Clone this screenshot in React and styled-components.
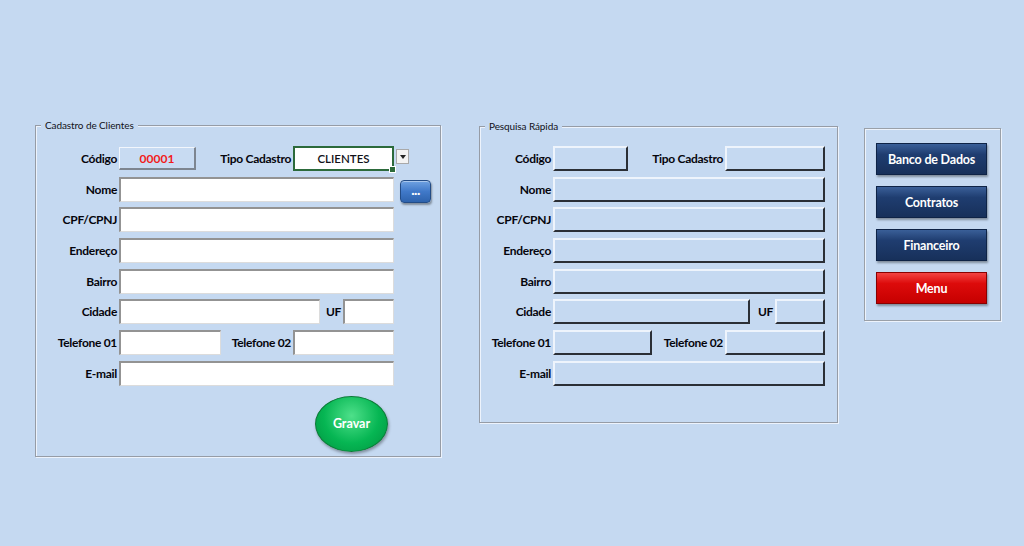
import React from 'react';
import styled, { createGlobalStyle } from 'styled-components';

const GlobalStyle = createGlobalStyle`
  html, body {
    margin: 0;
    padding: 0;
    background: #c5d9f1;
  }
  body {
    font-family: Lato, "Liberation Sans", sans-serif;
    color: #05050c;
  }
`;

const Page = styled.div`
  width: 1024px;
  height: 546px;
  box-sizing: border-box;
  padding: 125px 0 0 35px;
  display: flex;
  align-items: flex-start;
  background: #c5d9f1;
  overflow: hidden;
`;

const Frame = styled.section`
  position: relative;
  box-sizing: border-box;
  width: ${(p) => p.$w}px;
  margin-top: ${(p) => p.$top || 0}px;
  margin-left: ${(p) => p.$ml || 0}px;
  padding: ${(p) => p.$pt}px 0 ${(p) => p.$pb}px;
  display: flex;
  flex-direction: column;
  border: 1px solid #969ca6;
  box-shadow: inset 1px 1px 0 #edf3fc, 1px 1px 0 #edf3fc;
`;

const Legend = styled.div`
  position: absolute;
  top: -7px;
  left: 5px;
  padding: 0 4px;
  background: #c5d9f1;
  font-size: 10px;
  line-height: 12px;
  letter-spacing: -0.1px;
  color: #111118;
`;

const Rows = styled.div`
  display: flex;
  flex-direction: column;
  gap: 5.7px;
`;

const Row = styled.div`
  display: flex;
  align-items: center;
  height: 25px;
`;

const Label = styled.div`
  width: ${(p) => p.$w}px;
  box-sizing: border-box;
  padding-right: 2px;
  text-align: right;
  font-size: 12px;
  font-weight: 700;
  white-space: nowrap;
  letter-spacing: -0.3px;
`;

const Field = styled.div`
  width: ${(p) => p.$w}px;
  height: 25px;
  box-sizing: border-box;
  background: #fff;
  border-top: 2px solid #939393;
  border-left: 2px solid #939393;
  border-right: 1px solid #dcdcdc;
  border-bottom: 1px solid #dcdcdc;
`;

const CodeBox = styled.div`
  width: ${(p) => p.$w}px;
  height: 23px;
  box-sizing: border-box;
  display: flex;
  align-items: center;
  justify-content: center;
  background: #c8dbf2;
  border-top: 1px solid #f2f6fc;
  border-left: 1px solid #f2f6fc;
  border-right: 2px solid #7d8590;
  border-bottom: 2px solid #7d8590;
  color: #f21b1b;
  font-size: 12px;
  font-weight: 700;
`;

const Combo = styled.div`
  position: relative;
  width: 101px;
  height: 25px;
  box-sizing: border-box;
  display: flex;
  align-items: center;
  justify-content: center;
  background: #fff;
  border: 2px solid #2c6a3b;
  font-size: 11.5px;
  font-weight: 600;
  color: #111118;

  &::after {
    content: '';
    position: absolute;
    right: -4px;
    bottom: -4px;
    width: 5px;
    height: 5px;
    background: #2c6a3b;
    border: 1px solid #fff;
  }
`;

const DropArrow = styled.div`
  width: 13px;
  height: 15px;
  margin-left: 2px;
  margin-top: -4px;
  box-sizing: border-box;
  background: #f3f3f3;
  border: 1px solid #a9a9a9;
  display: flex;
  align-items: center;
  justify-content: center;

  &::after {
    content: '';
    border-left: 3px solid transparent;
    border-right: 3px solid transparent;
    border-top: 4px solid #222;
  }
`;

const DotsButton = styled.button`
  width: 31px;
  height: 23px;
  margin: 4px 0 0 6px;
  padding: 0 0 2px;
  box-sizing: border-box;
  border: 1px solid #234c86;
  border-radius: 4px;
  background: linear-gradient(#6fa2e2, #4079c9 50%, #2e63ad);
  box-shadow: 1px 2px 2px rgba(0, 0, 0, 0.35), inset 0 1px 0 rgba(255, 255, 255, 0.4);
  color: #fff;
  font-family: inherit;
  font-size: 14px;
  font-weight: 900;
  line-height: 1;
  letter-spacing: -0.5px;
`;

const Gravar = styled.button`
  align-self: flex-end;
  width: 73px;
  height: 56px;
  margin: 10px 52px 0 0;
  padding: 0;
  border: 1px solid #0b7a36;
  border-radius: 50%;
  background: radial-gradient(ellipse at 50% 35%, #4ee08a, #06b653 55%, #00923e);
  box-shadow: 1px 2px 3px rgba(0, 0, 0, 0.35);
  color: #fff;
  font-family: inherit;
  font-size: 12.5px;
  font-weight: 700;
`;

const ReadBox = styled.div`
  width: ${(p) => p.$w}px;
  height: 25px;
  box-sizing: border-box;
  background: #c5d9f1;
  border-top: 2px solid #eef4fc;
  border-left: 2px solid #eef4fc;
  border-right: 2px solid #2b2f36;
  border-bottom: 2px solid #2b2f36;
`;

const Panel = styled.nav`
  box-sizing: border-box;
  width: 137px;
  margin: 3px 0 0 26px;
  padding: 14px 0 16px 11px;
  display: flex;
  flex-direction: column;
  gap: 11px;
  border: 1px solid #9aa0a8;
  box-shadow: inset 1px 1px 0 #edf3fc, 1px 1px 0 #edf3fc;
`;

const NavButton = styled.button`
  width: 111px;
  height: 32px;
  padding: 0;
  border: 1px solid ${(p) => (p.$red ? '#8a0000' : '#0e2346')};
  background: ${(p) =>
    p.$red
      ? 'linear-gradient(#f24343, #dd0b0b 35%, #c60000)'
      : 'linear-gradient(#3a5f98, #1f3d70 35%, #17305a)'};
  box-shadow: 1px 2px 2px rgba(0, 0, 0, 0.35);
  color: #fff;
  font-family: inherit;
  font-size: 12.5px;
  font-weight: 700;
  letter-spacing: -0.2px;
`;

export default function App() {
  return (
    <>
      <GlobalStyle />
      <Page>
        <Frame $w={406} $pt={20} $pb={4}>
          <Legend>Cadastro de Clientes</Legend>
          <Rows>
            <Row>
              <Label $w={83}>Código</Label>
              <CodeBox $w={77}>00001</CodeBox>
              <Label $w={97}>Tipo Cadastro</Label>
              <Combo>CLIENTES</Combo>
              <DropArrow />
            </Row>
            <Row>
              <Label $w={83}>Nome</Label>
              <Field $w={275} />
              <DotsButton>...</DotsButton>
            </Row>
            <Row>
              <Label $w={83}>CPF/CPNJ</Label>
              <Field $w={275} />
            </Row>
            <Row>
              <Label $w={83}>Endereço</Label>
              <Field $w={275} />
            </Row>
            <Row>
              <Label $w={83}>Bairro</Label>
              <Field $w={275} />
            </Row>
            <Row>
              <Label $w={83}>Cidade</Label>
              <Field $w={201} />
              <Label $w={23}>UF</Label>
              <Field $w={51} />
            </Row>
            <Row>
              <Label $w={83}>Telefone 01</Label>
              <Field $w={102} />
              <Label $w={72}>Telefone 02</Label>
              <Field $w={101} />
            </Row>
            <Row>
              <Label $w={83}>E-mail</Label>
              <Field $w={275} />
            </Row>
          </Rows>
          <Gravar>Gravar</Gravar>
        </Frame>

        <Frame $w={359} $top={1} $ml={38} $pt={19} $pb={36}>
          <Legend>Pesquisa Rápida</Legend>
          <Rows>
            <Row>
              <Label $w={73}>Código</Label>
              <ReadBox $w={75} />
              <Label $w={97}>Tipo Cadastro</Label>
              <ReadBox $w={100} />
            </Row>
            <Row>
              <Label $w={73}>Nome</Label>
              <ReadBox $w={272} />
            </Row>
            <Row>
              <Label $w={73}>CPF/CPNJ</Label>
              <ReadBox $w={272} />
            </Row>
            <Row>
              <Label $w={73}>Endereço</Label>
              <ReadBox $w={272} />
            </Row>
            <Row>
              <Label $w={73}>Bairro</Label>
              <ReadBox $w={272} />
            </Row>
            <Row>
              <Label $w={73}>Cidade</Label>
              <ReadBox $w={197} />
              <Label $w={25}>UF</Label>
              <ReadBox $w={50} />
            </Row>
            <Row>
              <Label $w={73}>Telefone 01</Label>
              <ReadBox $w={99} />
              <Label $w={73}>Telefone 02</Label>
              <ReadBox $w={100} />
            </Row>
            <Row>
              <Label $w={73}>E-mail</Label>
              <ReadBox $w={272} />
            </Row>
          </Rows>
        </Frame>

        <Panel>
          <NavButton>Banco de Dados</NavButton>
          <NavButton>Contratos</NavButton>
          <NavButton>Financeiro</NavButton>
          <NavButton $red>Menu</NavButton>
        </Panel>
      </Page>
    </>
  );
}
